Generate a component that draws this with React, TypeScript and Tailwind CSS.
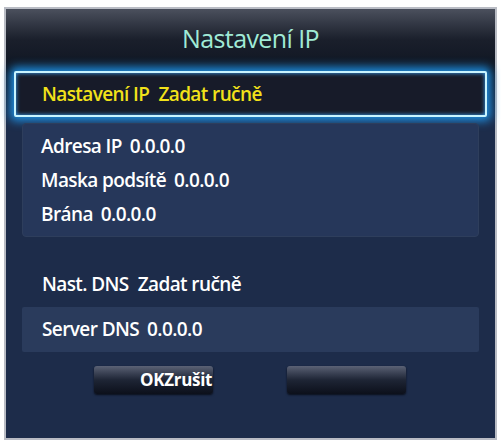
const rows = [
  { label: 'Adresa IP', value: '0.0.0.0' },
  { label: 'Maska podsítě', value: '0.0.0.0' },
  { label: 'Brána', value: '0.0.0.0' },
];

const font = { fontFamily: '"Open Sans", "Noto Sans", sans-serif' };

function Row({ label, value }: { label: string; value: string }) {
  return (
    <div className="flex h-[34px] items-center gap-[8px] pl-[18px] text-[19px] font-semibold tracking-[-0.6px] text-white">
      <span>{label}</span>
      <span>{value}</span>
    </div>
  );
}

export default function App() {
  return (
    <div className="h-[443px] w-[501px] bg-white pl-[4px] pt-[7px]" style={font}>
      <div className="flex h-[433px] w-[493px] flex-col border-2 border-[#b9bcc4] bg-[#1d2c4a]">
        {/* header */}
        <div className="flex h-[62px] items-center justify-center bg-gradient-to-b from-[#4b505d] via-[#1a1f2b] to-[#0e1522] pb-[2px] text-[25px] tracking-[-0.6px] text-[#a0ead6]">
          Nastavení IP
        </div>

        {/* focused row */}
        <div className="bg-gradient-to-b from-[#0e1522] to-[#1d2c4a] px-[8px] pb-[4px]">
          <div className="flex h-[46px] items-center rounded-[2px] border-[2px] border-[#c8f4ff] bg-[#171b29] pl-[26px] text-[19px] font-semibold tracking-[-0.6px] text-[#f2e21a] shadow-[0_0_10px_4px_#1f8fe0,inset_0_0_4px_#3aa6ff]">
            <span>Nastavení IP</span>
            <span className="ml-[9px]">Zadat ručně</span>
          </div>
        </div>

        {/* address block */}
        <div className="mx-[16px] mt-[2px] flex flex-col rounded-[4px] border border-[#2e3e5c] bg-[#26375a] py-[5px]">
          {rows.map((r) => (
            <Row key={r.label} label={r.label} value={r.value} />
          ))}
        </div>

        <div className="mt-[30px] flex h-[34px] items-center gap-[9px] pl-[36px] text-[19px] font-semibold tracking-[-0.6px] text-white">
          <span>Nast. DNS</span>
          <span>Zadat ručně</span>
        </div>

        <div className="mx-[16px] mt-[6px] flex h-[45px] items-center gap-[8px] rounded-[2px] bg-[#2a3b5c] pl-[20px] text-[19px] font-semibold tracking-[-0.6px] text-white">
          <span>Server DNS</span>
          <span>0.0.0.0</span>
        </div>

        {/* buttons */}
        <div className="mt-[14px] flex gap-[74px] pl-[88px]">
          <div className="relative h-[28px] w-[119px] rounded-[3px] bg-gradient-to-b from-[#5b6275] via-[#1e2535] to-[#0c101b] shadow-[0_1px_2px_#0a0f1a]">
            <span className="absolute left-[46px] top-[1px] whitespace-nowrap text-[17px] font-bold tracking-[-0.3px] text-white">
              OKZrušit
            </span>
          </div>
          <div className="h-[28px] w-[119px] rounded-[3px] bg-gradient-to-b from-[#5b6275] via-[#1e2535] to-[#0c101b] shadow-[0_1px_2px_#0a0f1a]" />
        </div>
      </div>
    </div>
  );
}
